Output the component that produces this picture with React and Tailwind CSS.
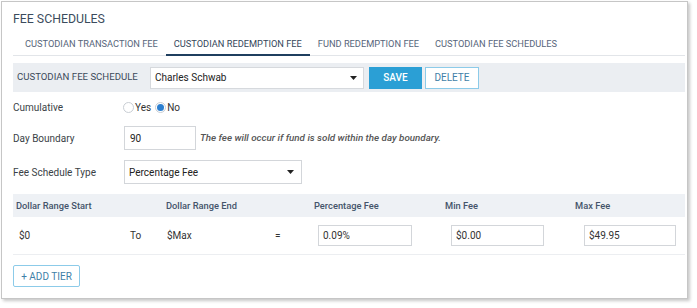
import { useState } from "react"

const tabs = [
  "CUSTODIAN TRANSACTION FEE",
  "CUSTODIAN REDEMPTION FEE",
  "FUND REDEMPTION FEE",
  "CUSTODIAN FEE SCHEDULES",
]

function Caret() {
  return (
    <svg width="7" height="4" viewBox="0 0 7 4" className="shrink-0">
      <path d="M0 0 L7 0 L3.5 4 Z" fill="#222" />
    </svg>
  )
}

function Radio({ checked, label }) {
  return (
    <label className="flex items-center gap-[1px]">
      <span className="w-[11px] h-[11px] rounded-full border border-[#c9ced4] bg-white flex items-center justify-center">
        {checked && <span className="w-[7px] h-[7px] rounded-full bg-[#2c7fd0]"></span>}
      </span>
      <span>{label}</span>
    </label>
  )
}

export default function App() {
  const [active] = useState(1)

  return (
    <div className="w-[697px] h-[308px] bg-white pt-px pl-px font-['Roboto',sans-serif] text-[10px] text-[#3a3f46]">
      <div className="w-[687px] h-[298px] border border-[#c6c6c6] bg-white shadow-[2px_2px_3px_rgba(0,0,0,0.22)] pl-[11px] pr-[2px]">
        {/* Title */}
        <div className="pt-[8px] h-[31px] text-[12.3px] leading-[18px] text-[#3b4b5d]">FEE SCHEDULES</div>

        {/* Tabs */}
        <div className="flex h-[23px] pl-[4px] border-b border-[#e2e5e9]">
          {tabs.map((t, i) => (
            <div
              key={t}
              className={
                i === active
                  ? "px-[8px] flex items-center text-[9.25px] text-[#34465a] border-b-2 border-[#1f3f5f] -mb-px"
                  : "px-[8px] flex items-center text-[9.25px] text-[#56657a]"
              }
            >
              {t}
            </div>
          ))}
        </div>

        {/* Schedule bar */}
        <div className="mt-[7px] h-[29px] bg-[#ebeef2] flex items-center">
          <div className="w-[137px] pl-[4px] text-[9.6px] text-[#3c4a5a]">CUSTODIAN FEE SCHEDULE</div>
          <div className="w-[214px] h-[22px] bg-white border border-[#d6d9dd] flex items-center justify-between pl-[4px] pr-[6px] text-[#222]">
            <span>Charles Schwab</span>
            <Caret />
          </div>
          <button className="ml-[5px] w-[53px] h-[22px] bg-[#2b9fd5] text-white text-[10px] font-medium">SAVE</button>
          <button className="ml-[3px] w-[54px] h-[22px] bg-white border border-[#8ccbe9] text-[#3f7fa8] text-[10px]">DELETE</button>
        </div>

        {/* Cumulative */}
        <div className="mt-[7px] h-[16px] flex items-center">
          <div className="w-[110px]">Cumulative</div>
          <div className="flex items-center gap-[4px] text-[#333]">
            <Radio label="Yes" />
            <Radio checked label="No" />
          </div>
        </div>

        {/* Day boundary */}
        <div className="mt-[11px] h-[24px] flex items-center">
          <div className="w-[111px]">Day Boundary</div>
          <div className="w-[72px] h-[24px] border border-[#d3d6da] flex items-center pl-[5px] text-[#222]">90</div>
          <div className="ml-[4px] italic font-medium text-[9.8px] text-[#555]">The fee will occur if fund is sold within the day boundary.</div>
        </div>

        {/* Fee schedule type */}
        <div className="mt-[10px] h-[24px] flex items-center">
          <div className="w-[111px]">Fee Schedule Type</div>
          <div className="w-[178px] h-[24px] border border-[#d3d6da] flex items-center justify-between pl-[4px] pr-[7px] text-[#222]">
            <span>Percentage Fee</span>
            <Caret />
          </div>
        </div>

        {/* Table header */}
        <div className="mt-[10px] h-[23px] bg-[#eef1f5] grid grid-cols-[150px_148px_131px_130px_1fr] items-center text-[#44546a] text-[9.3px] font-medium">
          <div className="pl-[3px]">Dollar Range Start</div>
          <div className="pl-[3px]">Dollar Range End</div>
          <div className="pl-[3px]">Percentage Fee</div>
          <div className="pl-[3px]">Min Fee</div>
          <div className="pl-[3px]">Max Fee</div>
        </div>

        {/* Table row */}
        <div className="h-[38px] border-b border-[#eceef1] grid grid-cols-[150px_148px_131px_130px_1fr] items-center text-[#333]">
          <div className="flex items-center">
            <span className="pl-[6px] w-[117px]">$0</span>
            <span>To</span>
          </div>
          <div className="flex items-center">
            <span className="pl-[4px] w-[112px]">$Max</span>
            <span>=</span>
          </div>
          <div className="pl-[7px]">
            <div className="w-[94px] h-[21px] border border-[#d3d6da] flex items-center pl-[4px]">0.09%</div>
          </div>
          <div className="pl-[9px]">
            <div className="w-[93px] h-[21px] border border-[#d3d6da] flex items-center pl-[4px]">$0.00</div>
          </div>
          <div className="pl-[12px]">
            <div className="w-[92px] h-[21px] border border-[#d3d6da] flex items-center pl-[4px]">$49.95</div>
          </div>
        </div>

        {/* Add tier */}
        <button className="mt-[10px] w-[67px] h-[22px] border border-[#8ccbe9] rounded-[2px] bg-white text-[#3f7fa8] text-[10px]">
          + ADD TIER
        </button>
      </div>
    </div>
  )
}
